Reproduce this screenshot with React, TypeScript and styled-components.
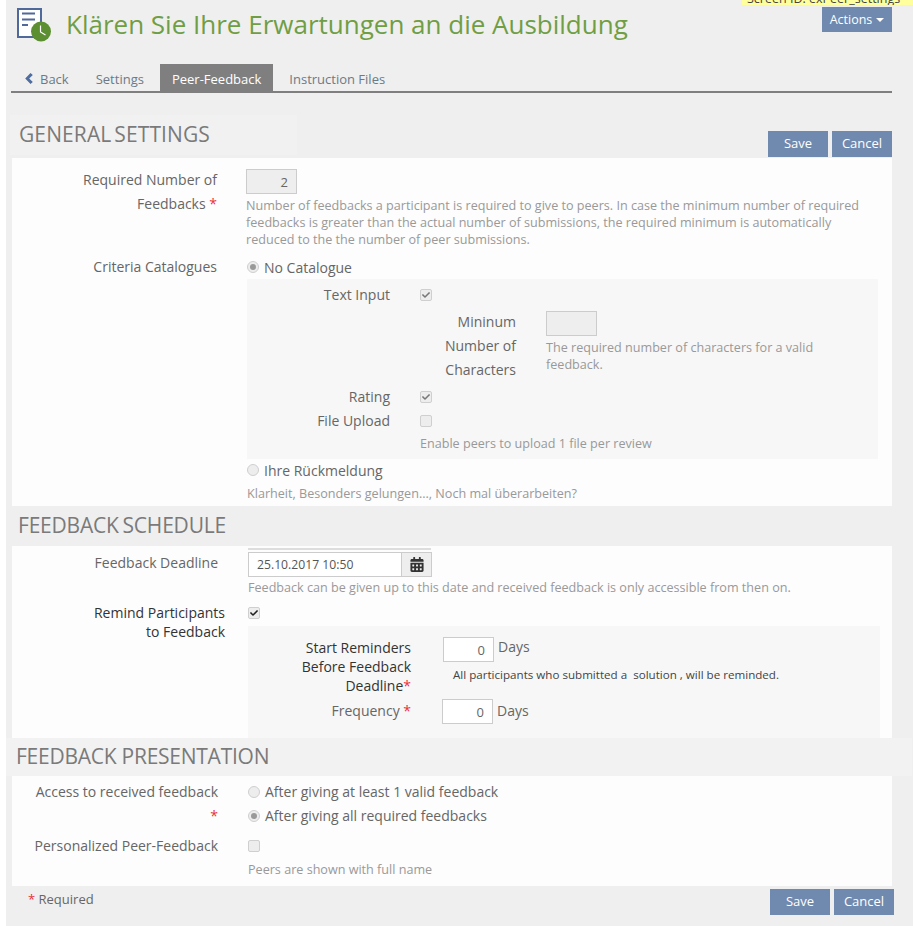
import React from "react";
import styled, { createGlobalStyle } from "styled-components";
import { FaCalendarAlt, FaCheck } from "react-icons/fa";

const GlobalStyle = createGlobalStyle`
  html, body {
    margin: 0;
    padding: 0;
    background: #fff;
  }
  body {
    font-family: "Open Sans", "Liberation Sans", sans-serif;
    font-size: 14px;
    color: #666;
  }
  * {
    box-sizing: border-box;
  }
`;

const Page = styled.div`
  position: relative;
  width: 907px;
  height: 926px;
  margin-left: 6px;
  background: #efefef;
  overflow: hidden;
`;

const ScreenId = styled.div`
  position: absolute;
  top: -8px;
  right: 0;
  width: 171px;
  height: 13px;
  padding-left: 5px;
  background: #ffff9e;
  color: #444;
  font-size: 12.5px;
  line-height: 13px;
  white-space: nowrap;
  overflow: hidden;
`;

const Header = styled.header`
  display: flex;
  align-items: flex-start;
  height: 64px;
  padding: 7px 0 0 11px;
`;

const Title = styled.h1`
  flex: 1;
  margin: -1px 0 0 13px;
  color: #6f9e45;
  font-size: 26px;
  font-weight: 400;
  line-height: 36px;
  white-space: nowrap;
`;

const Button = styled.button`
  width: 60px;
  height: 26px;
  padding: 0 0 2px;
  border: 0;
  background: #7089ae;
  color: #fff;
  font-family: inherit;
  font-size: 13px;
`;

const ActionsButton = styled(Button)`
  flex: none;
  width: 70px;
  height: 25px;
  margin-right: 21px;
  padding: 0;
  font-size: 12.5px;
  &::after {
    content: "";
    display: inline-block;
    margin-left: 4px;
    vertical-align: 2px;
    border-top: 4px solid #fff;
    border-left: 4px solid transparent;
    border-right: 4px solid transparent;
  }
`;

const Tabs = styled.nav`
  display: flex;
  gap: 4px;
  width: 881px;
  height: 29px;
  margin-left: 5px;
  padding-left: 2px;
  border-bottom: 2px solid #7f7f7f;
`;

const Tab = styled.a<{ $active?: boolean }>`
  display: flex;
  align-items: center;
  gap: 7px;
  height: 27px;
  padding: 2px 12px 0;
  background: ${(p) => (p.$active ? "#7f7f7f" : "transparent")};
  color: ${(p) => (p.$active ? "#fff" : "#6b7a88")};
  font-size: 13px;
  &:first-child {
    padding-right: 11px;
  }
`;

const TitleBar = styled.div`
  display: flex;
  align-items: flex-end;
  justify-content: space-between;
  width: 886px;
  height: 65px;
  padding-top: 22px;
`;

const GeneralHeading = styled.h2`
  width: 287px;
  height: 40px;
  margin: 0 0 3px 4px;
  padding-left: 9px;
  background: #f1f1f1;
  color: #7a7a7a;
  font-size: 21px;
  font-weight: 400;
  letter-spacing: 0.1px;
  word-spacing: -2.5px;
  line-height: 38px;
`;

const ButtonGroup = styled.div`
  display: flex;
  gap: 4px;
  margin-bottom: 1px;
`;

const Panel = styled.section<{ $height: number; $top: number }>`
  width: 880px;
  height: ${(p) => p.$height}px;
  margin-left: 6px;
  padding-top: ${(p) => p.$top}px;
  background: #fdfdfd;
`;

const Heading = styled.h2`
  height: 40px;
  margin: 0 0 0 12px;
  color: #7a7a7a;
  font-size: 21px;
  font-weight: 400;
  letter-spacing: -0.2px;
  word-spacing: -1.5px;
  line-height: 38px;
`;

const WideHeading = styled.h2`
  width: 909px;
  height: 38px;
  margin: 0 0 0 -3px;
  padding-left: 13px;
  background: #f2f2f2;
  color: #7a7a7a;
  font-size: 21px;
  font-weight: 400;
  letter-spacing: -0.25px;
  line-height: 36px;
`;

const Row = styled.div<{ $label: number; $gap: number; $top?: number }>`
  display: grid;
  grid-template-columns: ${(p) => p.$label}px 1fr;
  column-gap: ${(p) => p.$gap}px;
  margin-top: ${(p) => p.$top ?? 0}px;
`;

const Label = styled.label<{ $dark?: boolean; $lh?: number; $pad?: number }>`
  padding-top: ${(p) => p.$pad ?? 0}px;
  color: ${(p) => (p.$dark ? "#333" : "#666")};
  font-size: 14px;
  line-height: ${(p) => p.$lh ?? 24}px;
  text-align: right;
`;

const Star = styled.span`
  color: #e8313a;
`;

const Line = styled.div<{ $height?: number; $bottom?: number }>`
  display: flex;
  align-items: center;
  gap: 5px;
  height: ${(p) => p.$height ?? 24}px;
  padding-bottom: ${(p) => p.$bottom ?? 0}px;
  font-size: 14px;
  color: #666;
`;

const Help = styled.p<{ $top?: number; $width?: number }>`
  margin: ${(p) => p.$top ?? 3}px 0 0;
  max-width: ${(p) => p.$width ?? 620}px;
  color: #999;
  font-size: 12.6px;
  line-height: 17px;
`;

const DarkHelp = styled.p`
  margin: 5px 0 0 10px;
  color: #444;
  font-size: 11.6px;
  line-height: 16px;
  white-space: pre;
`;

const NumberInput = styled.input<{ $disabled?: boolean; $top?: number }>`
  display: block;
  width: 51px;
  height: 25px;
  margin-top: ${(p) => p.$top ?? 1}px;
  padding: 0 8px;
  border: 1px solid #ccc;
  background: ${(p) => (p.$disabled ? "#eee" : "#fff")};
  color: #666;
  font-family: inherit;
  font-size: 13px;
  text-align: right;
`;

const Box = styled.span<{ $dark?: boolean; $round?: boolean }>`
  display: inline-flex;
  flex: none;
  align-items: center;
  justify-content: center;
  width: 12px;
  height: 12px;
  border: 1px solid #cfcfcf;
  border-radius: ${(p) => (p.$round ? "50%" : "2px")};
  background: #ededed;
  color: ${(p) => (p.$dark ? "#222" : "#777")};
  svg {
    width: 8px;
    height: 8px;
  }
`;

const Dot = styled.span`
  width: 6px;
  height: 6px;
  border-radius: 50%;
  background: #999;
`;

const SubPanel = styled.div<{ $height: number; $right: number }>`
  height: ${(p) => p.$height}px;
  margin-right: ${(p) => p.$right}px;
  padding-top: 4px;
  background: #f7f7f7;
`;

const DaysLine = styled.div<{ $shift?: number; $offset?: number }>`
  display: flex;
  align-items: flex-start;
  gap: 4px;
  margin-left: ${(p) => p.$shift ?? 0}px;
  color: #666;
  line-height: ${(p) => 20 + (p.$offset ?? 0) * 2}px;
`;

const DateGroup = styled.div`
  display: flex;
  width: 184px;
  height: 25px;
  margin-top: 2px;
`;

const DateInput = styled.input`
  width: 153px;
  padding: 0 8px;
  border: 1px solid #ccc;
  border-right: 0;
  background: #fff;
  color: #555;
  font-family: inherit;
  font-size: 12.2px;
`;

const DateAddon = styled.span`
  display: flex;
  flex: 1;
  align-items: center;
  justify-content: center;
  border: 1px solid #ccc;
  background: #eee;
  color: #333;
  svg {
    width: 14px;
    height: 15px;
  }
`;

const RuleLine = styled.div`
  width: 183px;
  height: 2px;
  background: #ddd;
`;

const Footer = styled.footer`
  display: flex;
  align-items: flex-start;
  justify-content: space-between;
  width: 888px;
  padding: 3px 0 0 22px;
  color: #666;
  font-size: 13px;
  line-height: 20px;
`;

function DocIcon() {
  return (
    <svg width="36" height="36" viewBox="0 0 36 36" style={{ flex: "none" }}>
      <rect x="1" y="2" width="23" height="28" fill="#fff" stroke="#50699b" strokeWidth="2" />
      <path d="M5 6.5h13M5 12.5h13M5 18h6" stroke="#50699b" strokeWidth="2" fill="none" />
      <circle cx="24" cy="24.5" r="10" fill="#5b8f31" />
      <path d="M23.5 18.5v6.5l5 3" stroke="#fff" strokeWidth="1.2" fill="none" />
    </svg>
  );
}

function BackChevron() {
  return (
    <svg width="8" height="11" viewBox="0 0 8 11">
      <path d="M5.5 0L7.8 2L4.2 5.5L7.8 9L5.5 11L0.2 5.5Z" fill="#4f6d9f" />
    </svg>
  );
}

function Check({ on, dark }: { on?: boolean; dark?: boolean }) {
  return <Box $dark={dark}>{on && <FaCheck />}</Box>;
}

function Radio({ on }: { on?: boolean }) {
  return <Box $round>{on && <Dot />}</Box>;
}

export default function App() {
  return (
    <>
      <GlobalStyle />
      <Page>
        <ScreenId>Screen ID: exPeer_settings</ScreenId>
        <Header>
          <DocIcon />
          <Title>Klären Sie Ihre Erwartungen an die Ausbildung</Title>
          <ActionsButton>Actions</ActionsButton>
        </Header>
        <Tabs>
          <Tab>
            <BackChevron />
            Back
          </Tab>
          <Tab>Settings</Tab>
          <Tab $active>Peer-Feedback</Tab>
          <Tab>Instruction Files</Tab>
        </Tabs>

        <TitleBar>
          <GeneralHeading>GENERAL SETTINGS</GeneralHeading>
          <ButtonGroup>
            <Button>Save</Button>
            <Button>Cancel</Button>
          </ButtonGroup>
        </TitleBar>
        <Panel $height={348} $top={10}>
          <Row $label={205} $gap={29}>
            <Label>
              Required Number of
              <br />
              Feedbacks <Star>*</Star>
            </Label>
            <div>
              <NumberInput $disabled readOnly value="2" />
              <Help>
                Number of feedbacks a participant is required to give to peers. In case the minimum
                number of required feedbacks is greater than the actual number of submissions, the
                required minimum is automatically reduced to the the number of peer submissions.
              </Help>
            </div>
          </Row>
          <Row $label={205} $gap={30} $top={7}>
            <Label>Criteria Catalogues</Label>
            <div>
              <Line>
                <Radio on />
                No Catalogue
              </Line>
              <SubPanel $height={180} $right={14}>
                <Row $label={143} $gap={30}>
                  <Label>Text Input</Label>
                  <Line>
                    <Check on />
                  </Line>
                </Row>
                <Row $label={269} $gap={30} $top={3}>
                  <Label>
                    Mininum
                    <br />
                    Number of
                    <br />
                    Characters
                  </Label>
                  <div>
                    <NumberInput readOnly value="" $disabled />
                    <Help $width={300}>
                      The required number of characters for a valid feedback.
                    </Help>
                  </div>
                </Row>
                <Row $label={143} $gap={30} $top={3}>
                  <Label>Rating</Label>
                  <Line>
                    <Check on />
                  </Line>
                </Row>
                <Row $label={143} $gap={30}>
                  <Label>File Upload</Label>
                  <div>
                    <Line>
                      <Check />
                    </Line>
                    <Help $top={2}>Enable peers to upload 1 file per review</Help>
                  </div>
                </Row>
              </SubPanel>
              <Line $height={22}>
                <Radio />
                Ihre Rückmeldung
              </Line>
              <Help $top={4}>Klarheit, Besonders gelungen..., Noch mal überarbeiten?</Help>
            </div>
          </Row>
        </Panel>

        <Heading>FEEDBACK SCHEDULE</Heading>
        <Panel $height={192} $top={2}>
          <Row $label={206} $gap={30}>
            <Label $pad={3}>Feedback Deadline</Label>
            <div>
              <RuleLine />
              <DateGroup>
                <DateInput readOnly value="25.10.2017 10:50" />
                <DateAddon>
                  <FaCalendarAlt />
                </DateAddon>
              </DateGroup>
              <Help $top={2} $width={632}>
                Feedback can be given up to this date and received feedback is only accessible from
                then on.
              </Help>
            </div>
          </Row>
          <Row $label={213} $gap={23} $top={7}>
            <Label $dark $lh={19}>
              Remind Participants
              <br />
              to Feedback
            </Label>
            <div>
              <Line $height={23} $bottom={3}>
                <Check on dark />
              </Line>
              <SubPanel $height={112} $right={12}>
                <Row $label={163} $gap={32} $top={7}>
                  <Label $dark $lh={19} $pad={1}>
                    Start Reminders
                    <br />
                    Before Feedback
                    <br />
                    Deadline
                    <Star>*</Star>
                  </Label>
                  <div>
                    <DaysLine>
                      <NumberInput readOnly value="0" $top={0} />
                      Days
                    </DaysLine>
                    <DarkHelp>All participants who submitted a  solution , will be reminded.</DarkHelp>
                  </div>
                </Row>
                <Row $label={163} $gap={32} $top={4}>
                  <Label>
                    Frequency <Star>*</Star>
                  </Label>
                  <DaysLine $shift={-1} $offset={2}>
                    <NumberInput readOnly value="0" $top={0} />
                    Days
                  </DaysLine>
                </Row>
              </SubPanel>
            </div>
          </Row>
        </Panel>

        <WideHeading>FEEDBACK PRESENTATION</WideHeading>
        <Panel $height={110} $top={4}>
          <Row $label={206} $gap={30}>
            <Label>
              Access to received feedback
              <br />
              <Star>*</Star>
            </Label>
            <div>
              <Line $bottom={1}>
                <Radio />
                After giving at least 1 valid feedback
              </Line>
              <Line $bottom={1}>
                <Radio on />
                After giving all required feedbacks
              </Line>
            </div>
          </Row>
          <Row $label={206} $gap={30} $top={6}>
            <Label>Personalized Peer-Feedback</Label>
            <div>
              <Line>
                <Check />
              </Line>
              <Help>Peers are shown with full name</Help>
            </div>
          </Row>
        </Panel>
        <Footer>
          <span>
            <Star>*</Star> Required
          </span>
          <ButtonGroup>
            <Button>Save</Button>
            <Button>Cancel</Button>
          </ButtonGroup>
        </Footer>
      </Page>
    </>
  );
}
